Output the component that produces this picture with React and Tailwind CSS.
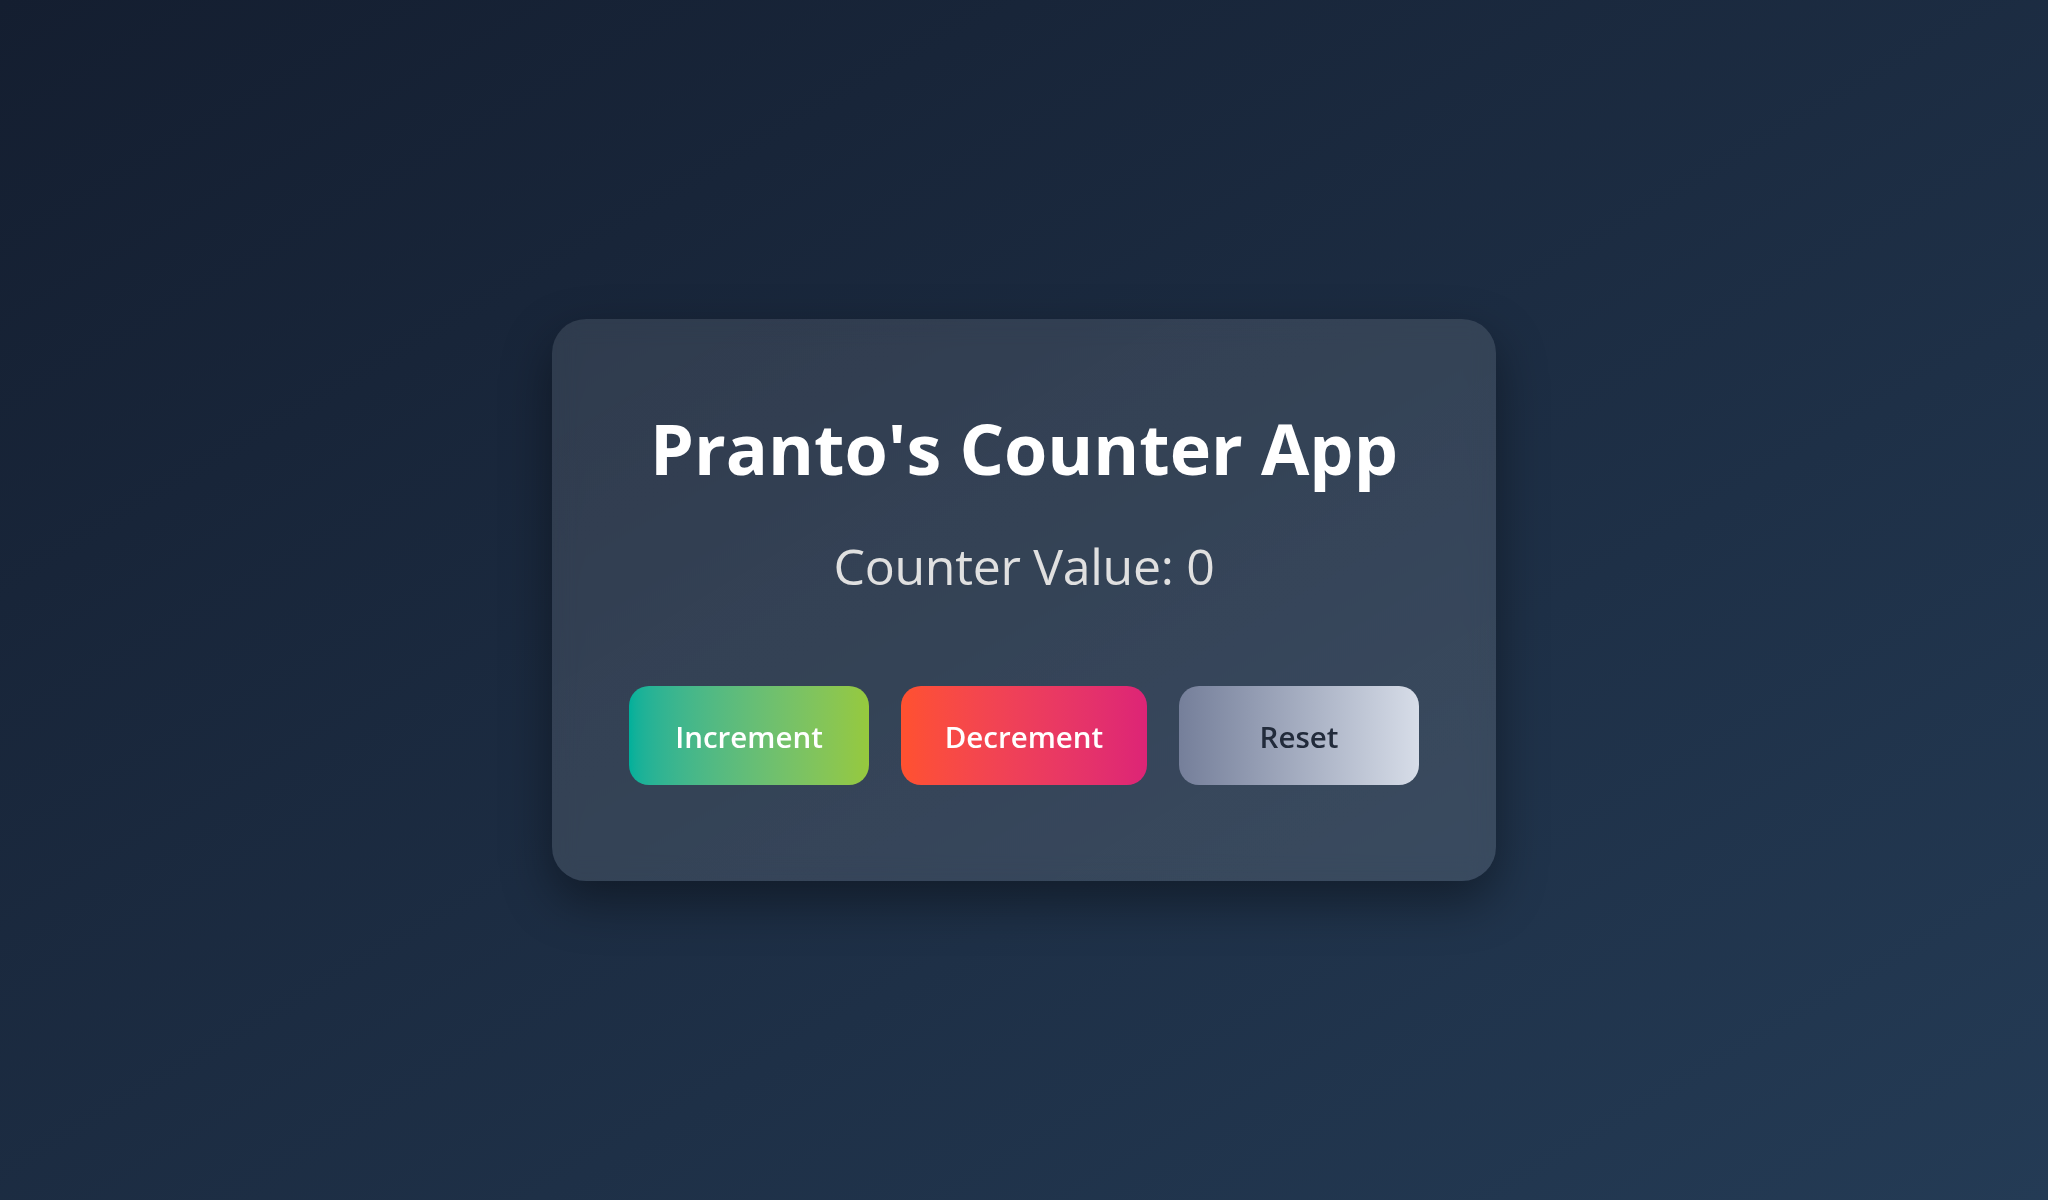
import React, { useState } from 'react';

export default function App() {
  const [count, setCount] = useState(0);

  return (
    <div className="min-h-screen w-full flex items-center justify-center bg-linear-to-br from-[#141e30] to-[#243b55] font-['Open_Sans','Noto_Sans',sans-serif]">
      <div className="relative w-[944px] overflow-hidden rounded-[34px] bg-white/10 backdrop-blur-md shadow-[0_20px_50px_rgba(0,0,0,0.4)] pt-[94px] pb-[96px] flex flex-col items-center">
        <div className="pointer-events-none absolute inset-0 bg-linear-to-br from-white/0 via-white/[0.01] to-white/[0.02]" />
        <h1 className="relative text-[70px] leading-none font-bold text-white">
          Pranto's Counter App
        </h1>
        <p className="relative mt-[58px] text-[50px] leading-none font-medium text-[#e0e0e0] tracking-[-0.3px]">
          Counter Value: {count}
        </p>
        <div className="relative mt-[95px] flex gap-8">
          <button
            className="w-[240px] h-[99px] pt-1 rounded-[20px] bg-linear-to-r from-[#00b09b] to-[#96c93d] text-white text-[29.5px] font-semibold flex items-center justify-center"
            onClick={() => setCount(c => c + 1)}
          >
            Increment
          </button>
          <button
            className="w-[246px] h-[99px] pt-1 rounded-[20px] bg-linear-to-r from-[#ff512f] to-[#dd2476] text-white text-[29.5px] font-semibold flex items-center justify-center"
            onClick={() => setCount(c => c - 1)}
          >
            Decrement
          </button>
          <button
            className="w-[240px] h-[99px] pt-1 rounded-[20px] bg-linear-to-r from-[#757f9a] to-[#d7dde8] text-[#222b3b] text-[29.5px] font-semibold flex items-center justify-center"
            onClick={() => setCount(0)}
          >
            Reset
          </button>
        </div>
      </div>
    </div>
  );
}
